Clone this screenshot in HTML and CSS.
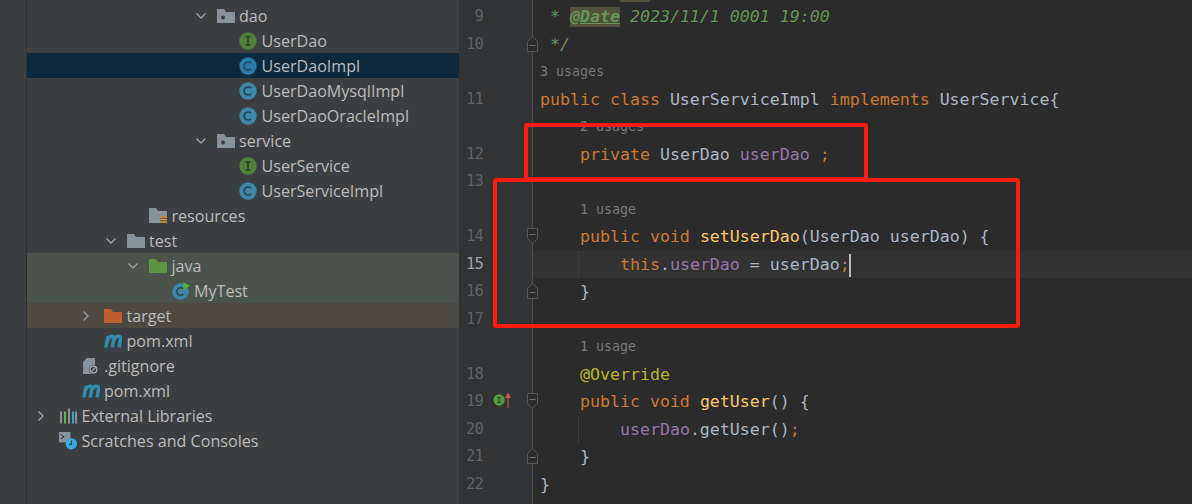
FILE: index.html
```
<!DOCTYPE html>
<html lang="en">
<head>
<meta charset="utf-8">
<title>UserServiceImpl</title>
<link rel="stylesheet" href="styles.css">
</head>
<body>
<svg class="defs" aria-hidden="true">
  <symbol id="chev-d" viewBox="0 0 12 8"><path d="M1.5 1.5 6 6l4.500-4.500" fill="none" stroke="#a0a2a4" stroke-width="1.300"/></symbol>
  <symbol id="chev-r" viewBox="0 0 8 12"><path d="M1.500 1.500 6 6l-4.500 4.500" fill="none" stroke="#a0a2a4" stroke-width="1.300"/></symbol>
  <symbol id="folder" viewBox="0 0 18 16"><path d="M0 1h7l2 3h9v11H0z" fill="#87939a"/></symbol>
  <symbol id="pkg" viewBox="0 0 18 16"><path d="M0 1h7l2 3h9v11H0z" fill="#87939a"/><circle cx="6" cy="9.500" r="2" fill="#3c3f41"/></symbol>
  <symbol id="java" viewBox="0 0 18 16"><path d="M0 1h7l2 3h9v11H0z" fill="#5a9440"/></symbol>
  <symbol id="target" viewBox="0 0 18 16"><path d="M0 1h7l2 3h9v11H0z" fill="#c0602c"/></symbol>
  <symbol id="res" viewBox="0 0 18 16"><path d="M0 0h7l2 3h9v5h-7v7H0z" fill="#87939a"/><path d="M11 9h7M11 11.500h7M11 14h7" stroke="#e0a33e" stroke-width="1.400"/></symbol>
  <symbol id="cls" viewBox="0 0 18 18"><circle cx="9" cy="9" r="8.700" fill="#3e86a8"/><path d="M12 6.200A4 4 0 1 0 12 11.800" fill="none" stroke="#2a4653" stroke-width="1.700"/></symbol>
  <symbol id="cls-sel" viewBox="0 0 18 18"><circle cx="9" cy="9" r="8.700" fill="#2a7aa3"/><path d="M12 6.200A4 4 0 1 0 12 11.800" fill="none" stroke="#24485e" stroke-width="1.700"/></symbol>
  <symbol id="ifc" viewBox="0 0 18 18"><circle cx="9" cy="9" r="8.700" fill="#4f8238"/><path d="M6.500 5h5M9 5v8M6.500 13h5" fill="none" stroke="#2e3f27" stroke-width="1.600"/></symbol>
  <symbol id="run" viewBox="0 0 19 19"><circle cx="9" cy="10" r="8.700" fill="#3e86a8"/><path d="M12 7.200A4 4 0 1 0 12 12.800" fill="none" stroke="#2a4653" stroke-width="1.700"/><path d="M12 0l7 4-7 4.500z" fill="#4fb52e"/></symbol>
  <symbol id="mvn" viewBox="0 0 18 13"><path d="M1.800 13 4.200 1.500M3.800 5C6 .8 10.200.8 9.800 4.500L8.200 13M10 5C12.200.8 17.200.8 16.600 4.500L15 13" fill="none" stroke="#2f8db0" stroke-width="3.500"/></symbol>
  <symbol id="ign" viewBox="0 0 18 18"><path d="M1 5 5 1h8v16H1z" fill="#87939a"/><circle cx="11.500" cy="12.500" r="4.500" fill="#3c3f41"/><circle cx="11.500" cy="12.500" r="3.400" fill="none" stroke="#afb1b3" stroke-width="1.200"/><path d="m9.300 14.700 4.400-4.400" stroke="#afb1b3" stroke-width="1.200"/></symbol>
  <symbol id="lib" viewBox="0 0 18 15"><path d="M1 3h2v12H1z" fill="#87939a"/><path d="M5 3h2v12H5z" fill="#62b543"/><path d="M9 0h2v15H9z" fill="#87939a"/><path d="M13 3h2v12h-2z" fill="#3e9fd1"/><path d="M16 3h2v12h-2z" fill="#87939a"/></symbol>
  <symbol id="scr" viewBox="0 0 19 19"><path d="M0 0h12v11H0z" fill="#87939a"/><path d="m2 2.500 3 2.500-3 2.500" fill="none" stroke="#3c3f41" stroke-width="1.200"/><circle cx="13" cy="12.500" r="6" fill="#3aa9e0"/><path d="M13 9v4h-2.500" fill="none" stroke="#1d3a4a" stroke-width="1.200"/></symbol>
  <symbol id="fold-up" viewBox="0 0 11 16"><path d="M.5 15.500V5.500L5.500.5l5 5v10z" fill="#2b2b2b" stroke="#555" /><path d="M2.500 9.500h6" stroke="#707070"/></symbol>
  <symbol id="fold-down" viewBox="0 0 11 16"><path d="M.5.500v10l5 5 5-5V.500z" fill="#2b2b2b" stroke="#555"/><path d="M2.500 6.500h6" stroke="#707070"/></symbol>
  <symbol id="impl" viewBox="0 0 18 17"><circle cx="6" cy="8" r="5.700" fill="#4f9a3c"/><path d="M4.300 5.500h3.400M6 5.500v5M4.300 10.500h3.400" fill="none" stroke="#25401f" stroke-width="1.100"/><path d="M15 16V3M12.800 5.500 15 1.500l2.200 4z" fill="#c75450" stroke="#c75450" stroke-width="1.200"/></symbol>
</svg>

<div class="app">
  <div class="strip"></div>
  <nav class="tree">
    <div class="row d7"><svg class="chev"><use href="#chev-d"/></svg><svg class="ico"><use href="#pkg"/></svg><span>dao</span></div>
    <div class="row d8"><span class="noch"></span><svg class="ico"><use href="#ifc"/></svg><span>UserDao</span></div>
    <div class="row d8 sel"><span class="noch"></span><svg class="ico"><use href="#cls-sel"/></svg><span>UserDaoImpl</span></div>
    <div class="row d8"><span class="noch"></span><svg class="ico"><use href="#cls"/></svg><span>UserDaoMysqlImpl</span></div>
    <div class="row d8"><span class="noch"></span><svg class="ico"><use href="#cls"/></svg><span>UserDaoOracleImpl</span></div>
    <div class="row d7"><svg class="chev"><use href="#chev-d"/></svg><svg class="ico"><use href="#pkg"/></svg><span>service</span></div>
    <div class="row d8"><span class="noch"></span><svg class="ico"><use href="#ifc"/></svg><span>UserService</span></div>
    <div class="row d8"><span class="noch"></span><svg class="ico"><use href="#cls"/></svg><span>UserServiceImpl</span></div>
    <div class="row d4"><span class="noch"></span><svg class="ico"><use href="#res"/></svg><span>resources</span></div>
    <div class="row d3"><svg class="chev"><use href="#chev-d"/></svg><svg class="ico"><use href="#folder"/></svg><span>test</span></div>
    <div class="row d4 green"><svg class="chev"><use href="#chev-d"/></svg><svg class="ico"><use href="#java"/></svg><span>java</span></div>
    <div class="row d5 green"><span class="noch"></span><svg class="ico"><use href="#run"/></svg><span>MyTest</span></div>
    <div class="row d2 brown"><svg class="chev chev-r"><use href="#chev-r"/></svg><svg class="ico"><use href="#target"/></svg><span>target</span></div>
    <div class="row d2"><span class="noch"></span><svg class="ico"><use href="#mvn"/></svg><span>pom.xml</span></div>
    <div class="row d1"><span class="noch"></span><svg class="ico"><use href="#ign"/></svg><span>.gitignore</span></div>
    <div class="row d1"><span class="noch"></span><svg class="ico"><use href="#mvn"/></svg><span>pom.xml</span></div>
    <div class="row d0"><svg class="chev chev-r"><use href="#chev-r"/></svg><svg class="ico"><use href="#lib"/></svg><span>External Libraries</span></div>
    <div class="row d0"><span class="noch"></span><svg class="ico"><use href="#scr"/></svg><span>Scratches and Consoles</span></div>
  </nav>
  <main class="editor">
    <div class="gutter">
      <div class="gl"><span class="num">9</span></div>
      <div class="gl"><span class="num">10</span><svg class="fold"><use href="#fold-up"/></svg></div>
      <div class="gl"></div>
      <div class="gl"><span class="num">11</span></div>
      <div class="gl"></div>
      <div class="gl"><span class="num">12</span></div>
      <div class="gl"><span class="num">13</span></div>
      <div class="gl"></div>
      <div class="gl"><span class="num">14</span><svg class="fold"><use href="#fold-down"/></svg></div>
      <div class="gl"><span class="num cur">15</span></div>
      <div class="gl"><span class="num">16</span><svg class="fold"><use href="#fold-up"/></svg></div>
      <div class="gl"><span class="num">17</span></div>
      <div class="gl"></div>
      <div class="gl"><span class="num">18</span></div>
      <div class="gl"><span class="num">19</span><svg class="impl"><use href="#impl"/></svg><svg class="fold"><use href="#fold-down"/></svg></div>
      <div class="gl"><span class="num">20</span></div>
      <div class="gl"><span class="num">21</span><svg class="fold"><use href="#fold-up"/></svg></div>
      <div class="gl"><span class="num">22</span></div>
    </div>
    <div class="code">
      <div class="cl"><span class="c"> * <span class="tag">@Date</span> 2023/11/1 0001 19:00</span></div>
      <div class="cl"><span class="c"> */</span></div>
      <div class="cl hint">3 usages</div>
      <div class="cl"><span class="k">public class</span> UserServiceImpl <span class="k">implements</span> UserService{</div>
      <div class="cl hint member">2 usages</div>
      <div class="cl">    <span class="k">private</span> UserDao <span class="f">userDao</span> <span class="k">;</span></div>
      <div class="cl"></div>
      <div class="cl hint member">1 usage</div>
      <div class="cl">    <span class="k">public void</span> <span class="m">setUserDao</span>(UserDao userDao) {</div>
      <div class="cl current guided">        <span class="k">this</span>.<span class="f">userDao</span> = userDao<span class="k">;</span><span class="caret"></span></div>
      <div class="cl">    }</div>
      <div class="cl"></div>
      <div class="cl hint member">1 usage</div>
      <div class="cl">    <span class="a">@Override</span></div>
      <div class="cl">    <span class="k">public void</span> <span class="m">getUser</span>() {</div>
      <div class="cl guided">        <span class="f">userDao</span>.getUser()<span class="k">;</span></div>
      <div class="cl">    }</div>
      <div class="cl">}</div>
    </div>
    <div class="prev-hl"></div>
    <div class="mark mark-a"></div>
    <div class="mark mark-b"></div>
  </main>
</div>
</body>
</html>
```
FILE: styles.css
```
* { box-sizing: border-box; }
html, body { margin: 0; height: 100%; }
body { background: #3c3f41; overflow: hidden; }
.defs { position: absolute; width: 0; height: 0; }

.app { display: flex; width: 1192px; height: 504px; overflow: hidden; }
.strip { width: 27px; flex: none; background: #3c3f41; border-right: 1px solid #323232; }

.tree { width: 433px; flex: none; padding-top: 3px; background: #3c3f41; border-right: 1px solid #323232;
  font: 16.1px "Open Sans", "Noto Sans", sans-serif; color: #bbbbbb; }
.row { display: flex; align-items: center; height: 25px; white-space: nowrap; }
.d0 { padding-left: 10px; }
.d1 { padding-left: 32.5px; }
.d2 { padding-left: 55px; }
.d3 { padding-left: 77.5px; }
.d4 { padding-left: 100px; }
.d5 { padding-left: 122.5px; }
.d7 { padding-left: 167.5px; }
.d8 { padding-left: 190px; }
.sel { background: #0d293e; }
.green { background: #4a544a; }
.brown { background: #4e4940; }
.noch { width: 22px; flex: none; }
.chev { width: 12px; height: 8px; margin-right: 10px; flex: none; }
.chev-r { width: 8px; height: 12px; margin-right: 14px; }
.ico { width: 18px; height: 18px; margin-right: 4.500px; flex: none; }

.editor { position: relative; flex: 1; display: flex; background: #2b2b2b; min-width: 0;
  font: 16.6px/27.5px "DejaVu Sans Mono", monospace; color: #a9b7c6; }
.gutter { width: 73px; flex: none; padding-top: 3px; background: #313335; border-right: 1px solid #4a4c4e; }
.gl { position: relative; display: flex; align-items: center; height: 27.5px; }
.num { width: 23px; text-align: right; font-size: 15.500px; letter-spacing: -.8px; color: #606366; }
.cur { color: #a4a3a3; }
.fold { position: absolute; left: 67px; top: 5px; width: 11px; height: 16px; }
.impl { position: absolute; left: 33px; top: 4px; width: 18px; height: 17px; }

.code { flex: 1; padding-top: 3px; min-width: 0; }
.cl { position: relative; height: 27.5px; padding-left: 7px; white-space: pre; }
.current { background: #323232; }
.guided::before { content: ""; position: absolute; left: 45px; top: 0; bottom: 0; width: 1px; background: #3b3b3b; }
.hint { font-size: 13.300px; color: #787878; }
.member { padding-left: 47px; }
.c { color: #629755; font-style: italic; }
.tag { background: #52503a; font-weight: bold; text-decoration: underline; padding-bottom: 1px; }
.k { color: #cc7832; }
.f { color: #9876aa; }
.m { color: #ffc66d; }
.a { color: #bbb529; }
.caret { display: inline-block; width: 2px; height: 23px; margin-left: -1px; vertical-align: middle; background: #bbbbbb; }

.prev-hl { position: absolute; left: 160px; top: 0; width: 30px; height: 2px; background: #52503a; }
.mark { position: absolute; border: 4px solid #fb1c0e; border-radius: 3px; pointer-events: none; }
.mark-a { left: 64px; top: 123px; width: 344px; height: 58px; }
.mark-b { left: 33px; top: 178px; width: 527px; height: 150px; }
```
